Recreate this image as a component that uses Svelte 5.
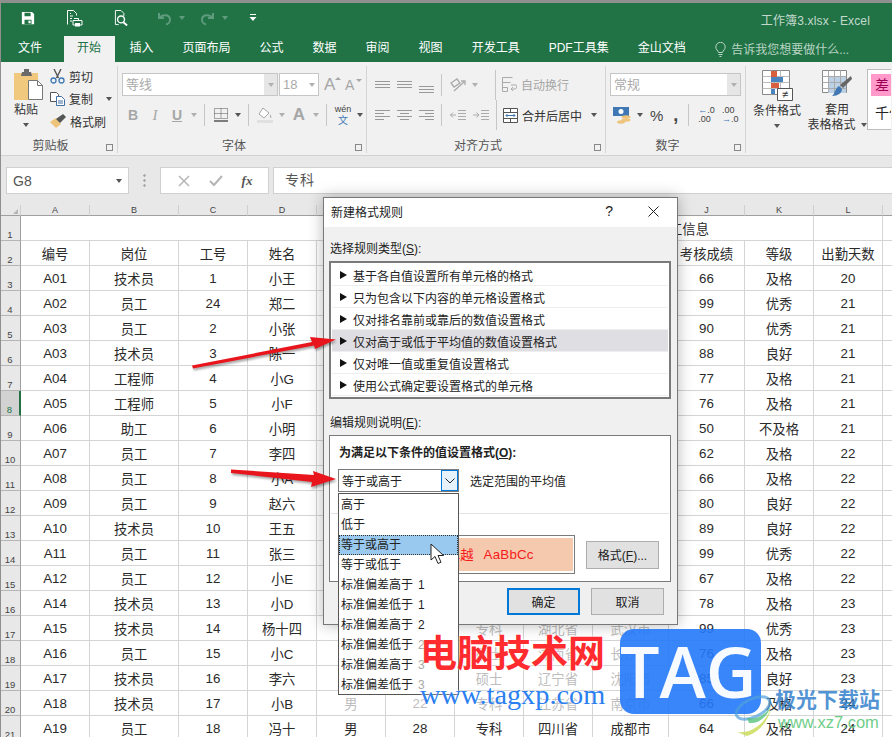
<script>
  const tabs = ['插入', '页面布局', '公式', '数据', '审阅', '视图', '开发工具', 'PDF工具集', '金山文档'];
  const columns = ['A', 'B', 'C', 'D', 'E', 'F', 'G', 'H', 'I', 'J', 'K', 'L', ''];
  const rows = [
    [],
    ['编号', '岗位', '工号', '姓名', '', '', '', '', '', '考核成绩', '等级', '出勤天数'],
    ['A01', '技术员', '1', '小王', '', '', '', '', '', '66', '及格', '20'],
    ['A02', '员工', '24', '郑二', '', '', '', '', '', '99', '优秀', '21'],
    ['A03', '员工', '2', '小张', '', '', '', '', '', '90', '优秀', '21'],
    ['A03', '技术员', '3', '陈一', '', '', '', '', '', '88', '良好', '21'],
    ['A04', '工程师', '4', '小G', '', '', '', '', '', '77', '及格', '21'],
    ['A05', '工程师', '5', '小F', '', '', '', '', '', '76', '及格', '21'],
    ['A06', '助工', '6', '小明', '', '', '', '', '', '50', '不及格', '21'],
    ['A07', '员工', '7', '李四', '', '', '', '', '', '62', '及格', '22'],
    ['A08', '员工', '8', '小A', '', '', '', '', '', '66', '及格', '22'],
    ['A09', '员工', '9', '赵六', '', '', '', '', '', '80', '良好', '22'],
    ['A10', '技术员', '10', '王五', '', '', '', '', '', '89', '良好', '22'],
    ['A11', '员工', '11', '张三', '', '', '', '', '', '99', '优秀', '22'],
    ['A12', '员工', '12', '小E', '', '', '', '', '', '67', '及格', '22'],
    ['A14', '技术员', '13', '小D', '', '', '', '', '', '78', '及格', '23'],
    ['A15', '技术员', '14', '杨十四', '', '', '专科', '湖北省', '武汉市', '99', '优秀', '23'],
    ['A16', '员工', '15', '小C', '', '', '硕士', '湖南省', '长沙市', '76', '及格', '23'],
    ['A17', '技术员', '16', '李六', '', '', '硕士', '辽宁省', '沈阳市', '85', '良好', '23'],
    ['A18', '技术员', '17', '小B', '男', '22', '专科', '江苏省', '南京市', '66', '及格', '24'],
    ['A19', '员工', '18', '冯十', '男', '28', '专科', '四川省', '成都市', '64', '及格', '24']
  ];
  const ruleTypes = [
    '基于各自值设置所有单元格的格式',
    '只为包含以下内容的单元格设置格式',
    '仅对排名靠前或靠后的数值设置格式',
    '仅对高于或低于平均值的数值设置格式',
    '仅对唯一值或重复值设置格式',
    '使用公式确定要设置格式的单元格'
  ];
  const options = [
    ['高于', ''], ['低于', ''], ['等于或高于', ''], ['等于或低于', ''],
    ['标准偏差高于', '1'], ['标准偏差低于', '1'], ['标准偏差高于', '2'],
    ['标准偏差低于', '2'], ['标准偏差高于', '3'], ['标准偏差低于', '3']
  ];
  // rows hazed by the watermark
  const isFaded = (r, c) => r >= 16 && r <= 19 && c >= 4 && c <= 8;
</script>

<div class="excel">
  <div class="topline"></div>
  <div class="titlebar">
    <svg class="qat" style="margin-left:1px" width="14" height="14" viewBox="0 0 16 16"><path d="M1 1h11.500L15 3.500V15H1z" fill="#fff"/><path d="M4 2h7v4H4z" fill="#217346"/><path d="M4 10h8v5H4z" fill="#217346"/><path d="M8.500 11H11v3H8.500z" fill="#fff"/></svg>
    <svg class="qat" style="margin-left:31px" width="17" height="17" viewBox="0 0 17 17" fill="none" stroke="#fff"><path d="M1.500 14.500v-14h6l3 3v2"/><path d="M4 3.500h1M4 6h3M4 8.500h2M4 11h2"/><path d="M8 8.500h4.500v2M7 10.500h9v4.500H7z" fill="#217346"/><path d="M9 13h5v3.500H9z" fill="#fff" stroke="none"/></svg>
    <svg class="qat" style="margin-left:31px" width="15" height="16" viewBox="0 0 16 17" fill="none" stroke="#fff"><path d="M5 15.500H1.500V.5h6l3 3v3"/><circle cx="7.500" cy="10" r="3.700" stroke-width="1.500"/><path d="M10 13l4 3.500" stroke-width="2"/></svg>
    <svg class="qat" style="margin-left:28px" width="15" height="15" viewBox="0 0 15 15" fill="none" stroke="#5f9c7d" stroke-width="2"><path d="M2 2v5h5M2.500 7C5 3.500 12 3 13 8c.5 3-2 5-4 5.500"/></svg>
    <span class="tiny" style="margin-left:7px;border-top-color:#5f9c7d"></span>
    <svg class="qat" style="margin-left:15px" width="15" height="15" viewBox="0 0 15 15" fill="none" stroke="#5f9c7d" stroke-width="2"><path d="M13 2v5H8M12.500 7C10 3.500 3 3 2 8c-.5 3 2 5 4 5.500"/></svg>
    <span class="tiny" style="margin-left:7px;border-top-color:#5f9c7d"></span>
    <svg class="qat" style="margin-left:21px" width="8" height="8" viewBox="0 0 8 8" fill="#fff"><path d="M1 0h6v1H1zM.5 3h7L4 7z"/></svg>
    <span class="doc">工作簿3.xlsx - Excel</span>
  </div>

  <div class="tabs">
    <span class="tab file">文件</span>
    <span class="tab active">开始</span>
    {#each tabs as tab}<span class="tab">{tab}</span>{/each}
    <svg class="bulb" width="11" height="15" viewBox="0 0 11 15" fill="none" stroke="#b9d3c4"><path d="M3.500 10.500C3 8.500.8 7.500.8 5a4.700 4.700 0 0 1 9.400 0c0 2.500-2.200 3.500-2.700 5.500zM3.500 12.500h4M4.500 14.500h2"/></svg>
    <span class="tell">告诉我您想要做什么...</span>
  </div>

  <div class="ribbon">
    <section class="group clip">
      <div class="group-body clip-body">
        <div class="paste">
          <svg width="29" height="32" viewBox="0 0 29 32"><path d="M0 4h24v27H0z" fill="#f0c97e"/><path d="M8 3h2V0h5v3h2l1 4H7z" fill="#6a6a6a"/><path d="M14.500 11.500h9l5 5v14h-14z" fill="#fff" stroke="#777"/><path d="M23.500 11.500v5h5" fill="none" stroke="#777"/></svg>
          <span class="label">粘贴</span>
          <span class="tiny dark"></span>
        </div>
        <div class="clip-list">
          <div class="clip-row">
            <svg width="15" height="15" viewBox="0 0 15 15" fill="none"><path d="M4 0l4.500 9M11 0L6.500 9" stroke="#555" stroke-width="1.400"/><circle cx="3.500" cy="11.500" r="2.500" stroke="#3f78b5" stroke-width="1.300"/><circle cx="11.500" cy="11.500" r="2.500" stroke="#3f78b5" stroke-width="1.300"/></svg>
            <span>剪切</span>
          </div>
          <div class="clip-row">
            <svg width="15" height="14" viewBox="0 0 15 14" fill="#fff" stroke="#555"><path d="M.5.500h6l2 2v7h-8z"/><path d="M6.500 4.500h5l3 3v6h-8z" stroke="#3f6fa5"/><path d="M8 9h5M8 11h5" stroke="#3f6fa5"/></svg>
            <span>复制</span>
            <span class="tiny dark" style="margin-left:9px"></span>
          </div>
          <div class="clip-row">
            <svg width="16" height="14" viewBox="0 0 16 14"><path d="M0 8l6-4 5 6-5 4z" fill="#eec37a"/><path d="M6 5l7-5 3 3-6 6z" fill="#555"/></svg>
            <span>格式刷</span>
          </div>
        </div>
      </div>
      <div class="group-label">剪贴板<span class="launcher"></span></div>
    </section>

    <section class="group font">
      <div class="group-body stack">
        <div class="line">
          <div class="combo" style="width:156px"><span class="combo-text">等线</span><span class="combo-btn"><i class="tiny"></i></span></div>
          <div class="combo" style="width:40px;margin-left:1px"><span class="combo-text">18</span><span class="combo-btn white"><i class="tiny"></i></span></div>
          <span class="big-a" style="margin-left:5px">A<i class="up"></i></span>
          <span class="big-a small" style="margin-left:8px">A<i class="down"></i></span>
        </div>
        <div class="line second">
          <span class="tool b">B</span><span class="tool i">I</span><span class="tool u">U</span>
          <span class="arrow"><i class="tiny"></i></span><span class="sep"></span>
          <span class="tool"><svg width="14" height="14" viewBox="0 0 14 14" fill="none" stroke="#555" stroke-dasharray="1 1"><path d="M.5.500h13v10H.5zM7 .5v10M.5 5.500h13"/><path d="M0 13h14" stroke-dasharray="none" stroke-width="1.500"/></svg></span>
          <span class="arrow"><i class="tiny dark"></i></span><span class="sep"></span>
          <span class="tool"><svg width="16" height="16" viewBox="0 0 16 16"><path d="M6 1l6 5-5 5-5-4z" fill="#fff" stroke="#a6a6a6"/><path d="M13 7c1 2 2 3 1 4-1 0-1-2-1-4z" fill="#a6a6a6"/><path d="M0 13h16v3H0z" fill="#e0e0e0"/></svg></span>
          <span class="arrow"><i class="tiny"></i></span>
          <span class="tool font-a">A</span>
          <span class="arrow"><i class="tiny"></i></span><span class="sep"></span>
          <span class="tool wen"><b>wén</b><em>文</em></span>
          <span class="arrow"><i class="tiny dark"></i></span>
        </div>
      </div>
      <div class="group-label">字体<span class="launcher"></span></div>
    </section>

    <section class="group align">
      <div class="group-body stack">
        <div class="line">
          <span class="tool"><svg width="15" height="8" viewBox="0 0 15 8" stroke="#999"><path d="M0 .5h15M0 3.500h15M0 6.500h15"/></svg></span>
          <span class="tool"><svg width="15" height="8" viewBox="0 0 15 8" stroke="#999"><path d="M0 .5h15M0 3.500h15M0 6.500h15"/></svg></span>
          <span class="tool low"><svg width="15" height="8" viewBox="0 0 15 8" stroke="#999"><path d="M0 .5h15M0 3.500h15M0 6.500h15"/></svg></span>
          <span class="sep"></span>
          <span class="tool"><svg width="16" height="14" viewBox="0 0 16 14" fill="none" stroke="#aaa" stroke-width="1.300"><path d="M1 5l6-4 3 4-6 4zM4 13l10-9M11 3h4v4"/></svg></span>
          <span class="arrow"><i class="tiny"></i></span>
          <span class="sep tall-sep"></span>
          <svg width="15" height="15" viewBox="0 0 15 15" fill="none" stroke="#aaa"><path d="M.5.500h10M.5 5.500h8M.5 10.500h5M.5.500v14h5v-4M9 8h5c1 0 1 4-1 4h-4m2-2l-2 2 2 2"/></svg>
          <span class="text off" style="margin-left:4px">自动换行</span>
        </div>
        <div class="line second">
          <span class="tool"><svg width="15" height="11" viewBox="0 0 15 11" stroke="#999"><path d="M0 .5h15M0 3.500h9M0 6.500h15M0 9.500h9"/></svg></span>
          <span class="tool"><svg width="15" height="11" viewBox="0 0 15 11" stroke="#999"><path d="M0 .5h15M3 3.500h9M0 6.500h15M3 9.500h9"/></svg></span>
          <span class="tool"><svg width="15" height="11" viewBox="0 0 15 11" stroke="#999"><path d="M0 .5h15M6 3.500h9M0 6.500h15M6 9.500h9"/></svg></span>
          <span class="sep"></span>
          <span class="tool"><svg width="16" height="11" viewBox="0 0 16 11" fill="none" stroke="#aaa"><path d="M8 .5h8M8 3.500h8M8 6.500h8M8 9.500h8M6 5H0m3-2.500L.5 5 3 7.500" /></svg></span>
          <span class="tool tight"><svg width="16" height="11" viewBox="0 0 16 11" fill="none" stroke="#aaa"><path d="M8 .5h8M8 3.500h8M8 6.500h8M8 9.500h8M0 5h6M3.500 2.500L6 5 3.500 7.500"/></svg></span>
          <span class="sep merge-sep"></span>
          <svg width="15" height="15" viewBox="0 0 15 15" fill="#fff" stroke="#555"><path d="M.5.500h14v14H.5z"/><path d="M.5 4.500h14M.5 10.500h14M7.500.5v4M7.500 10.500v4"/><path d="M3 7.500h9M4.500 6L3 7.500 4.500 9M10.500 6L12 7.500 10.500 9" stroke="#3f78b5"/></svg>
          <span class="text" style="margin-left:4px">合并后居中</span>
          <span class="tiny dark" style="margin-left:9px"></span>
        </div>
      </div>
      <div class="group-label">对齐方式<span class="launcher"></span></div>
    </section>

    <section class="group number">
      <div class="group-body stack">
        <div class="line">
          <div class="combo" style="width:131px"><span class="combo-text">常规</span><span class="combo-btn"><i class="tiny"></i></span></div>
        </div>
        <div class="line second">
          <svg style="margin-left:3px" width="18" height="17" viewBox="0 0 18 17"><path d="M0 0h16v9H0z" fill="#3f78b5"/><circle cx="8" cy="4.500" r="2.500" fill="#fff"/><ellipse cx="13" cy="10" rx="4.500" ry="1.700" fill="#eec37a"/><ellipse cx="13" cy="13" rx="4.500" ry="1.700" fill="#eec37a"/><ellipse cx="8" cy="15" rx="4" ry="1.700" fill="#eec37a"/></svg>
          <span class="tiny dark" style="margin-left:6px"></span>
          <span class="pct">%</span>
          <span class="comma">,</span>
          <span class="sep" style="margin:0 9px 0 10px"></span>
          <span class="dec"><i class="blue">←</i>.0<br/>.00</span>
          <span class="dec" style="margin-left:7px">.00<br/><i class="blue">→</i>.0</span>
        </div>
      </div>
      <div class="group-label">数字<span class="launcher"></span></div>
    </section>

    <section class="group styles">
      <div class="style-btn" style="width:62px">
        <svg width="31" height="31" viewBox="0 0 31 31"><path d="M.5.500h27v24H.5z" fill="#fff" stroke="#888"/><path d="M.5 6.500h27M.5 12.500h27M.5 18.500h27M9.500.5v24M18.500.5v24" stroke="#bbb"/><path d="M9 1h6v6H9z" fill="#d9603f"/><path d="M9 7h12v5H9z" fill="#4a83bd"/><path d="M9 13h8v5H9z" fill="#d9603f"/><path d="M9 19h4v5H9z" fill="#4a83bd"/><path d="M15.500 18.500h15v12h-15z" fill="#fff" stroke="#555"/><text x="23" y="28" font-size="11" text-anchor="middle" fill="#333" font-family="Liberation Sans">≠</text></svg>
        <span class="style-text">条件格式</span>
        <span class="tiny dark"></span>
      </div>
      <div class="style-btn wide">
        <svg width="30" height="30" viewBox="0 0 30 30"><path d="M.5.500h24v22H.5z" fill="#fff" stroke="#888"/><path d="M6 6h18v17H6z" fill="#bdd1e6"/><path d="M.5 6.500h24M.5 12.500h24M.5 18.500h24M6.500.5v22M12.500.5v22M18.500.5v22" stroke="#aaa"/><path d="M29 6l1 3-9 9-3-3z" fill="#666"/><path d="M17 16l3 3c0 4-4 7-10 7 3-2 3-8 7-10z" fill="#3f78b5"/></svg>
        <span class="style-text">套用</span>
        <span class="style-text">表格格式<i class="tiny dark" style="margin-left:5px"></i></span>
      </div>
      <div class="gallery">
        <span class="bad">差</span>
        <span class="thousand">千位</span>
      </div>
    </section>
  </div>

  <div class="formula">
    <div class="name-box"><span>G8</span><i class="tiny dark"></i></div>
    <div class="dots"></div>
    <div class="fn-box">
      <svg width="12" height="12" viewBox="0 0 12 12" stroke="#b5b5b5" stroke-width="1.500"><path d="M1 1l10 10M11 1L1 11"/></svg>
      <svg width="14" height="12" viewBox="0 0 14 12" fill="none" stroke="#b5b5b5" stroke-width="2"><path d="M1 6l4 4 8-9"/></svg>
      <span class="fx">fx</span>
    </div>
    <div class="input">专科</div>
  </div>

  <div class="sheet">
    <div class="corner"><i></i></div>
    {#each columns as col}
      <div class="col-head">{col}</div>
    {/each}
    {#each rows as row, r}
      <div class="row-head" class:sel={r === 7}>{r + 1}</div>
      {#if r === 0}
        <div class="cell merged">员工信息</div>
        <div class="cell"></div>
        <div class="cell"></div>
        <div class="cell cut"></div>
      {:else}
        {#each row as value, c}
          <div class="cell" class:faded={isFaded(r, c)}>{value}</div>
        {/each}
        <div class="cell cut"></div>
      {/if}
    {/each}
  </div>

  <div class="dialog">
    <div class="dlg-title">
      <span>新建格式规则</span>
      <span class="help">?</span>
      <svg class="close" width="11" height="11" viewBox="0 0 11 11" stroke="#222"><path d="M.5.500l10 10M10.500.5l-10 10"/></svg>
    </div>
    <div class="dlg-label first">选择规则类型(<u>S</u>):</div>
    <ul class="rule-list">
      {#each ruleTypes as rule, i}
        <li class:current={i === 3}><i class="tri"></i>{rule}</li>
      {/each}
    </ul>
    <div class="dlg-label second-label">编辑规则说明(<u>E</u>):</div>
    <div class="rule-box">
      <div class="bold">为满足以下条件的值设置格式(<u>O</u>):</div>
      <div class="crit">
        <div class="select">
          <span>等于或高于</span>
          <span class="select-btn"><svg width="10" height="6" viewBox="0 0 10 6" fill="none" stroke="#222"><path d="M.5.500L5 5 9.500.5"/></svg></span>
        </div>
        <span class="crit-text">选定范围的平均值</span>
      </div>
      <div class="divider"></div>
      <div class="preview-row">
        <div class="preview"><div class="swatch">微软卓越<span class="latin">AaBbCc</span></div></div>
        <button class="btn fmt">格式(<u>F</u>)...</button>
      </div>
    </div>
    <div class="actions">
      <button class="btn ok">确定</button>
      <button class="btn">取消</button>
    </div>
    <ul class="dropdown">
      {#each options as opt, i}
        <li class:hl={i === 2}>{opt[0]}{#if opt[1]}<span class="num" class:dim={i >= 7}>{opt[1]}</span>{/if}</li>
      {/each}
    </ul>
    <svg class="cursor" width="14" height="22" viewBox="0 0 14 22"><path d="M1 1v16l4-3.500 3 7 3-1.300-3-6.700h5.500z" fill="#fff" stroke="#222"/></svg>
  </div>

  <svg class="arrows" width="892" height="737" viewBox="0 0 892 737">
    <polygon points="192,365.500 312,342 310,337 336,339.500 315,349 314,345.500 193,368.500" fill="#e9151c"/>
    <polygon points="231,469.500 314,475 313,471 336,479 311,487 312,482 231,473" fill="#e9151c"/>
  </svg>

  <div class="mark-cn">电脑技术网</div>
  <div class="mark-url">www.tagxp.com</div>
  <div class="mark-tag">TAG</div>
  <svg class="swirl" width="44" height="46" viewBox="0 0 44 46" fill="none">
    <ellipse cx="20" cy="16" rx="18" ry="9" transform="rotate(-25 20 16)" stroke="#4f9fdc" stroke-width="3" opacity=".7"/>
    <path d="M4 40c14 2 28-8 34-24-3 14-12 24-24 28z" fill="#cbdc5a" opacity=".85"/>
    <path d="M14 26c8 2 18-2 24-12-3 10-12 18-22 17z" fill="#56c27a" opacity=".8"/>
  </svg>
  <div class="mark-jg">极光下载站</div>
  <div class="mark-xz">www.xz7.com</div>
  <div class="edge"></div>
</div>

<style>
  :global(body) {
    margin: 0;
    overflow: hidden;
    background: #fff;
  }

  .excel {
    position: relative;
    width: 892px;
    height: 737px;
    overflow: hidden;
    font-family: "Liberation Sans", "Noto Sans CJK SC", sans-serif;
    font-size: 12px;
    color: #333;
  }
  .edge { position: absolute; left: 0; top: 0; bottom: 0; width: 1px; background: #8f8f8f; }

  i { font-style: normal; }
  ul { list-style: none; margin: 0; padding: 0; }

  .topline { height: 3px; background: #8f8f8f; }

  .titlebar {
    height: 33px;
    background: #217346;
    display: flex;
    align-items: center;
    padding-left: 20px;
    padding-bottom: 3px;
    box-sizing: border-box;
  }
  .doc { margin-left: auto; padding: 3px 22px 0 0; color: #c3d9cc; font-size: 12px; letter-spacing: .15px; }

  .tiny {
    display: inline-block;
    width: 0;
    height: 0;
    border-left: 3.500px solid transparent;
    border-right: 3.500px solid transparent;
    border-top: 4px solid #b0b0b0;
  }
  .tiny.dark { border-top-color: #555; }

  .tabs {
    height: 26px;
    background: #217346;
    display: flex;
    align-items: center;
    color: #fff;
  }
  .tab { padding: 0 14.500px 2px; line-height: 24px; white-space: nowrap; }
  .tab.file { padding: 0 22px 2px 18px; }
  .tab.active { background: #f1f1f1; color: #217346; padding: 0 14px 2px 13px; }
  .bulb { margin-left: 15px; }
  .tell { margin-left: 5px; color: #b9d3c4; padding-bottom: 1px; }

  .ribbon {
    height: 94px;
    box-sizing: border-box;
    background: #f1f1f1;
    border-bottom: 1px solid #d2d2d2;
    display: flex;
  }
  .group {
    box-sizing: border-box;
    height: 87px;
    margin-top: 4px;
    border-right: 1px solid #d5d5d5;
    display: flex;
    flex-direction: column;
    flex-shrink: 0;
  }
  .group-body { flex: 1; min-height: 0; }
  .group-label {
    position: relative;
    text-align: center;
    height: 18px;
    line-height: 22px;
    padding-right: 16px;
    color: #555;
  }
  .font .group-label, .align .group-label, .number .group-label { margin-left: -4px; }
  .launcher {
    position: absolute;
    right: 4px;
    top: 9px;
    width: 6px;
    height: 6px;
    border-left: 1px solid #888;
    border-top: 1px solid #888;
    box-shadow: inset -2px -2px 0 -1px #888;
  }

  .clip { width: 118px; }
  .clip-body { display: flex; }
  .paste {
    width: 50px;
    padding: 3px 0 0 14px;
    box-sizing: border-box;
    display: flex;
    flex-direction: column;
    align-items: flex-start;
    color: #333;
  }
  .paste .label { line-height: 18px; }
  .paste .tiny { margin: 4px 0 0 9px; }
  .clip-list { display: flex; flex-direction: column; margin-top: -1px; }
  .clip-row { height: 22.500px; display: flex; align-items: center; gap: 4px; }
  .clip-row svg { flex: 0 0 auto; }

  .font { width: 249px; padding-left: 4px; }
  .align { width: 239px; padding-left: 4px; }
  .number { width: 140px; padding-left: 4px; }
  .styles { width: 145px; flex-direction: row; border-right: none; align-items: flex-start; }

  .stack { display: flex; flex-direction: column; }
  .line { display: flex; align-items: center; height: 23px; margin-top: 7px; }
  .line.second { margin-top: 8px; height: 22px; }

  .combo {
    box-sizing: border-box;
    height: 23px;
    border: 1px solid #c6c6c6;
    background: #fff;
    display: flex;
    align-items: stretch;
    flex-shrink: 0;
  }
  .combo-text { flex: 1; padding-left: 3px; line-height: 21px; color: #aaa; font-size: 13px; }
  .combo-btn {
    width: 13px;
    background: #e6e6e6;
    display: flex;
    align-items: center;
    justify-content: center;
  }
  .combo-btn.white { background: #fff; }
  .big-a { position: relative; font-size: 17px; color: #a6a6a6; width: 13px; }
  .big-a.small { font-size: 14px; }
  .big-a .up, .big-a .down {
    position: absolute;
    right: -4px;
    top: 2px;
    border-left: 3px solid transparent;
    border-right: 3px solid transparent;
  }
  .big-a .up { border-bottom: 3px solid #a6a6a6; }
  .big-a .down { border-top: 3px solid #a6a6a6; }

  .tool {
    width: 22px;
    height: 22px;
    flex-shrink: 0;
    display: flex;
    align-items: center;
    justify-content: center;
    color: #a6a6a6;
    font-size: 14px;
  }
  .tool.tight { margin-left: 1px; }
  .tool.low { padding-top: 10px; box-sizing: border-box; }
  .tool.b { font-weight: 700; }
  .tool.i { font-style: italic; font-family: "Liberation Serif", serif; font-size: 15px; }
  .tool.u { text-decoration: underline; font-weight: 700; }
  .tool.font-a { font-size: 17px; font-weight: 700; }
  .tool.wen { flex-direction: column; line-height: 11px; }
  .wen b { font-weight: 400; font-size: 9px; color: #444; }
  .wen em { font-style: normal; font-size: 10px; color: #3f78b5; }
  .arrow { width: 12px; display: flex; align-items: center; justify-content: center; flex-shrink: 0; }
  .sep { width: 1px; height: 22px; background: #c6c6c6; margin: 0 5px 0 4px; flex-shrink: 0; }
  .tall-sep { margin-left: 14px; margin-right: 6px; height: 30px; }
  .merge-sep { margin-left: 4px; margin-right: 6px; height: 30px; }
  .text { color: #333; white-space: nowrap; }
  .text.off { color: #a6a6a6; }
  .pct { margin-left: 7px; font-size: 15px; color: #444; }
  .comma { margin-left: 10px; font-size: 18px; font-weight: 700; color: #444; line-height: 14px; }
  .dec { font-size: 9px; line-height: 9px; color: #444; white-space: nowrap; }
  .blue { color: #3f78b5; font-weight: 700; }

  .style-btn {
    display: flex;
    flex-direction: column;
    align-items: center;
    width: 60px;
    padding: 4px 0 0 0;
    box-sizing: border-box;
    color: #333;
  }
  .style-btn .tiny { margin-top: 5px; }
  .style-btn.wide { width: 57px; padding-left: 1px; }
  .style-text { line-height: 15px; white-space: nowrap; }
  .style-btn svg { margin-bottom: 3px; }
  .style-btn .style-text .tiny { vertical-align: 2px; margin-top: 0; }
  .gallery {
    margin: 3px 0 0 2px;
    flex: 1;
    height: 61px;
    box-sizing: border-box;
    background: #fff;
    border: 1px solid #bdbdbd;
    border-right: none;
    padding: 4px 0 0 3px;
    overflow: hidden;
    display: flex;
    flex-direction: column;
    font-size: 14px;
  }
  .bad { background: #ff9acb; color: #9c0055; height: 22px; line-height: 22px; padding-left: 4px; }
  .thousand { padding: 6px 0 0 4px; color: #222; white-space: nowrap; }

  .formula {
    height: 49px;
    box-sizing: border-box;
    padding: 11px 0 11px 6px;
    background: #e8e8e8;
    display: flex;
  }
  .name-box {
    width: 123px;
    box-sizing: border-box;
    background: #fff;
    border: 1px solid #d0d0d0;
    display: flex;
    align-items: center;
    justify-content: space-between;
    padding: 0 6px;
    font-size: 14px;
    color: #555;
  }
  .dots {
    width: 31px;
    margin: 6px 0;
    background: radial-gradient(circle, #aaa 1px, transparent 1.500px) center / 3px 5px repeat-y;
  }
  .fn-box {
    width: 109px;
    box-sizing: border-box;
    background: #fff;
    border: 1px solid #d0d0d0;
    display: flex;
    align-items: center;
    justify-content: space-around;
    padding: 0 6px 0 7px;
  }
  .fx { font-family: "Liberation Serif", serif; font-style: italic; font-weight: 700; font-size: 13px; color: #555; }
  .input {
    flex: 1;
    margin-left: 4px;
    background: #fff;
    border: 1px solid #d0d0d0;
    border-right: none;
    padding-left: 11px;
    line-height: 25px;
    font-size: 14px;
    color: #555;
    letter-spacing: 1px;
  }

  .sheet {
    display: grid;
    grid-template-columns: 21px 69px 89px 69px 69px 69px 69px 69px 69px 76px 76px 69px 69px 10px;
    grid-template-rows: 11px;
    grid-auto-rows: 25px;
    background: #fff;
  }
  .corner { background: #e8e8e8; position: relative; border-bottom: 1px solid #9f9f9f; box-sizing: border-box; border-right: 1px solid #cfcfcf; }
  .corner i {
    position: absolute;
    right: 2px;
    bottom: 1px;
    border-left: 5px solid transparent;
    border-bottom: 5px solid #b5b5b5;
  }
  .col-head {
    background: #e8e8e8;
    border-bottom: 1px solid #9f9f9f;
    border-right: 1px solid #cfcfcf;
    box-sizing: border-box;
    text-align: center;
    font-size: 9px;
    line-height: 10px;
    color: #444;
  }
  .row-head {
    background: #e8e8e8;
    border-bottom: 1px solid #b5b5b5;
    border-right: 1px solid #9f9f9f;
    box-sizing: border-box;
    display: flex;
    align-items: flex-end;
    justify-content: center;
    font-size: 9.500px;
    line-height: 11px;
    color: #444;
  }
  .row-head.sel {
    background: #d2d2d2;
    color: #217346;
    border-right: 2px solid #217346;
  }
  .cell {
    border-right: 1px solid #d4d4d4;
    border-bottom: 1px solid #d4d4d4;
    box-sizing: border-box;
    display: flex;
    align-items: center;
    justify-content: center;
    font-size: 13.330px;
    color: #2a2a2a;
    white-space: nowrap;
    overflow: hidden;
  }
  .cell.merged {
    grid-column: span 10;
    justify-content: flex-end;
    padding-right: 36px;
    border-right: none;
  }
  .cell.faded { color: #bdbdbd; }
  .cell.cut { border-right: none; }

  .dialog {
    position: absolute;
    left: 323px;
    top: 197px;
    width: 355px;
    height: 428px;
    box-sizing: border-box;
    background: #f0f0f0;
    border: 1px solid #777;
    box-shadow: 0 0 14px rgba(0, 0, 0, .28);
    color: #222;
  }
  .dlg-title {
    height: 29px;
    box-sizing: border-box;
    background: #fff;
    display: flex;
    align-items: center;
    padding: 0 18px 3px 7px;
  }
  .help { margin-left: auto; margin-right: 35px; font-size: 14px; }
  .close { flex-shrink: 0; }
  .dlg-label { padding-left: 6px; line-height: 16px; }
  .dlg-label.first { margin-top: 14px; }
  .dlg-label.second-label { margin-top: 16px; }
  .rule-list {
    margin: 4px 0 0 5px;
    width: 342px;
    height: 138px;
    box-sizing: border-box;
    background: #fff;
    border: 2px solid #7a7a7a;
    padding: 1px 1px;
  }
  .rule-list li {
    height: 22px;
    padding: 1px 0 0 8px;
    display: flex;
    align-items: center;
    box-sizing: border-box;
    border-bottom: 1px solid #eee;
    white-space: nowrap;
  }
  .rule-list li.current { background: #dfdee3; }
  .tri {
    width: 0;
    height: 0;
    border-left: 7px solid #111;
    border-top: 4px solid transparent;
    border-bottom: 4px solid transparent;
    margin-right: 6px;
  }
  .rule-box {
    margin: 4px 0 0 5px;
    width: 342px;
    height: 147px;
    box-sizing: border-box;
    background: #fff;
    border: 1px solid #7a7a7a;
    padding: 9px 0 0 0;
  }
  .bold { padding-left: 9px; font-weight: 700; line-height: 16px; }
  .crit { display: flex; align-items: center; margin: 8px 0 0 8px; }
  .select {
    width: 121px;
    height: 23px;
    box-sizing: border-box;
    border: 1px solid #7a7a7a;
    display: flex;
    align-items: center;
    justify-content: space-between;
    padding-left: 3px;
  }
  .select span:first-child { padding-bottom: 1px; }
  .select-btn {
    width: 17px;
    height: 21px;
    box-sizing: border-box;
    background: #e5f1fb;
    border: 1px solid #0078d7;
    display: flex;
    align-items: center;
    justify-content: center;
  }
  .crit-text { margin-left: 11px; padding-bottom: 1px; }
  .divider { height: 1px; background: #e3e3e3; margin: 21px 1px 0; }
  .preview-row { display: flex; align-items: center; margin: 21px 11px 0 55px; justify-content: space-between; }
  .preview {
    width: 190px;
    height: 39px;
    box-sizing: border-box;
    border: 1px solid #7a7a7a;
    padding: 2px 1px 2px 2px;
    background: #fff;
  }
  .swatch {
    height: 100%;
    box-sizing: border-box;
    background: #f5c9ad;
    color: #f51a1a;
    display: flex;
    align-items: center;
    justify-content: center;
    font-size: 13.330px;
    white-space: pre;
    padding-right: 7px;
  }
  .latin { margin-left: 10px; letter-spacing: .2px; }
  .btn {
    width: 73px;
    height: 27px;
    box-sizing: border-box;
    background: #e1e1e1;
    border: 1px solid #adadad;
    border-radius: 0;
    padding: 0;
    font: inherit;
    color: #222;
  }
  .btn.fmt { height: 28px; }
  .actions { display: flex; justify-content: flex-end; gap: 11px; margin: 6px 13px 0 0; }
  .btn.ok { border: 2px solid #0078d7; }

  .dropdown {
    position: absolute;
    left: 14px;
    top: 295px;
    width: 121px;
    height: 202px;
    box-sizing: border-box;
    background: #fff;
    border: 1px solid #555;
    padding: 1px 0;
  }
  .dropdown li {
    height: 20px;
    line-height: 21px;
    padding-left: 2px;
    white-space: nowrap;
    box-sizing: border-box;
  }
  .dropdown li.hl { background: #99c9ef; outline: 1px dotted #333; outline-offset: -1px; }
  .num { margin-left: 5px; }
  .num.dim { color: #a8a8a8; }
  .cursor { position: absolute; left: 106px; top: 345px; }

  .arrows { position: absolute; left: 0; top: 0; filter: drop-shadow(1px 2px 1px rgba(0, 0, 0, .35)); }

  .mark-cn {
    position: absolute;
    left: 420px;
    top: 632px;
    font-size: 37px;
    line-height: 46px;
    font-weight: 700;
    color: #ff2b2f;
    white-space: nowrap;
    text-shadow: 0 0 3px #fff;
  }
  .mark-url {
    position: absolute;
    left: 420px;
    top: 678px;
    font-family: "Liberation Serif", serif;
    font-size: 28.300px;
    line-height: 34px;
    color: #2b7ff0;
    white-space: nowrap;
    text-shadow: 0 0 3px #fff;
  }
  .mark-tag {
    position: absolute;
    left: 620px;
    top: 629px;
    width: 141px;
    height: 85px;
    box-sizing: border-box;
    padding-right: 7px;
    border-radius: 14px;
    background: rgba(36, 120, 250, .9);
    color: rgba(255, 255, 255, .96);
    font-family: "Open Sans", sans-serif;
    font-weight: 600;
    font-size: 70px;
    line-height: 85px;
    text-align: center;
  }
  .swirl { position: absolute; left: 733px; top: 692px; }
  .mark-jg {
    position: absolute;
    left: 775px;
    top: 685px;
    font-size: 21px;
    line-height: 30px;
    font-weight: 700;
    color: rgba(52, 130, 205, .85);
    white-space: nowrap;
  }
  .mark-xz {
    position: absolute;
    left: 778px;
    top: 711px;
    font-size: 16.500px;
    line-height: 22px;
    color: #6fce8a;
    white-space: nowrap;
  }
</style>
